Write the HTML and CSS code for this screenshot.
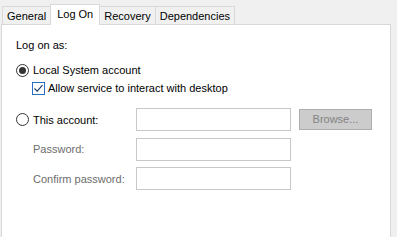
FILE: index.html
```html
<!doctype html>
<html>
	<head>
		<meta charset="utf-8"/>
		<link rel="stylesheet" href="styles.css">
	</head>
	<body>
		<div class="tabs">
			<div class="tab">General</div>
			<div class="tab active">Log On</div>
			<div class="tab">Recovery</div>
			<div class="tab">Dependencies</div>
		</div>
		<div class="panel">
			<div class="caption">Log on as:</div>

			<div class="row option">
				<span class="radio checked"></span>
				<span>Local System account</span>
			</div>
			<div class="row check-row">
				<span class="checkbox">
					<svg width="11" height="11" viewBox="0 0 11 11"><path d="M1.5 5.5 L4.2 8.2 L9.5 2.2" fill="none" stroke="#1a3a6b" stroke-width="1.1"/></svg>
				</span>
				<span>Allow service to interact with desktop</span>
			</div>

			<div class="row account first">
				<div class="label-col">
					<span class="radio"></span>
					<span>This account:</span>
				</div>
				<div class="field"></div>
				<div class="browse">Browse...</div>
			</div>
			<div class="row account">
				<div class="label-col dim">Password:</div>
				<div class="field"></div>
			</div>
			<div class="row account">
				<div class="label-col dim">Confirm password:</div>
				<div class="field"></div>
			</div>
		</div>
	</body>
</html>
```

FILE: styles.css
```css
html, body {
	margin: 0;
	height: 100%;
}

body {
	background-color: #f0f0f0;
	font-family: "Liberation Sans", Arial, sans-serif;
	font-size: 11px;
	color: #000;
	overflow: hidden;
}

.tabs {
	display: flex;
	align-items: flex-end;
	height: 24px;
	padding-left: 2px;
	position: relative;
	z-index: 1;
}

.tab {
	height: 17px;
	line-height: 18px;
	padding: 0 4px;
	border: 1px solid #d9d9d9;
	border-bottom: none;
	border-left: none;
	background-color: #f0f0f0;
}

.tab:first-child {
	border-left: 1px solid #d9d9d9;
}

.tab.active {
	height: 20px;
	line-height: 18px;
	margin-bottom: -1px;
	margin-left: -1px;
	border-left: 1px solid #d9d9d9;
	background-color: #fff;
	padding: 0 6px;
}

.panel {
	width: 390px;
	height: 220px;
	margin-left: 1px;
	background-color: #fff;
	border: 1px solid #d9d9d9;
	box-sizing: border-box;
	padding: 13px 0 0 14px;
}

.caption {
	line-height: 15px;
	height: 23px;
}

.row {
	display: flex;
	align-items: center;
}

.option {
	height: 18px;
}

.check-row {
	height: 18px;
	padding-left: 16px;
}

.radio {
	display: inline-block;
	flex: none;
	width: 11px;
	height: 11px;
	border: 1px solid #333;
	border-radius: 50%;
	margin-right: 4px;
	position: relative;
}

.radio.checked::after {
	content: "";
	position: absolute;
	left: 2px;
	top: 2px;
	width: 7px;
	height: 7px;
	border-radius: 50%;
	background-color: #333;
}

.checkbox {
	display: inline-flex;
	flex: none;
	width: 11px;
	height: 11px;
	border: 1px solid #2b6fc4;
	margin-right: 3px;
}

.account {
	height: 23px;
	margin-top: 6.5px;
}

.account.first {
	margin-top: 11px;
}

.label-col {
	width: 120px;
	display: flex;
	align-items: center;
}

.label-col.dim {
	color: #6d6d6d;
	padding-left: 17px;
	width: 103px;
}

.field {
	width: 153px;
	height: 21px;
	border: 1px solid #c8c8c8;
	background-color: #fff;
}

.browse {
	width: 71px;
	height: 19px;
	line-height: 19px;
	margin-left: 8px;
	border: 1px solid #adadad;
	background-color: #cccccc;
	color: #838383;
	text-align: center;
}
```
